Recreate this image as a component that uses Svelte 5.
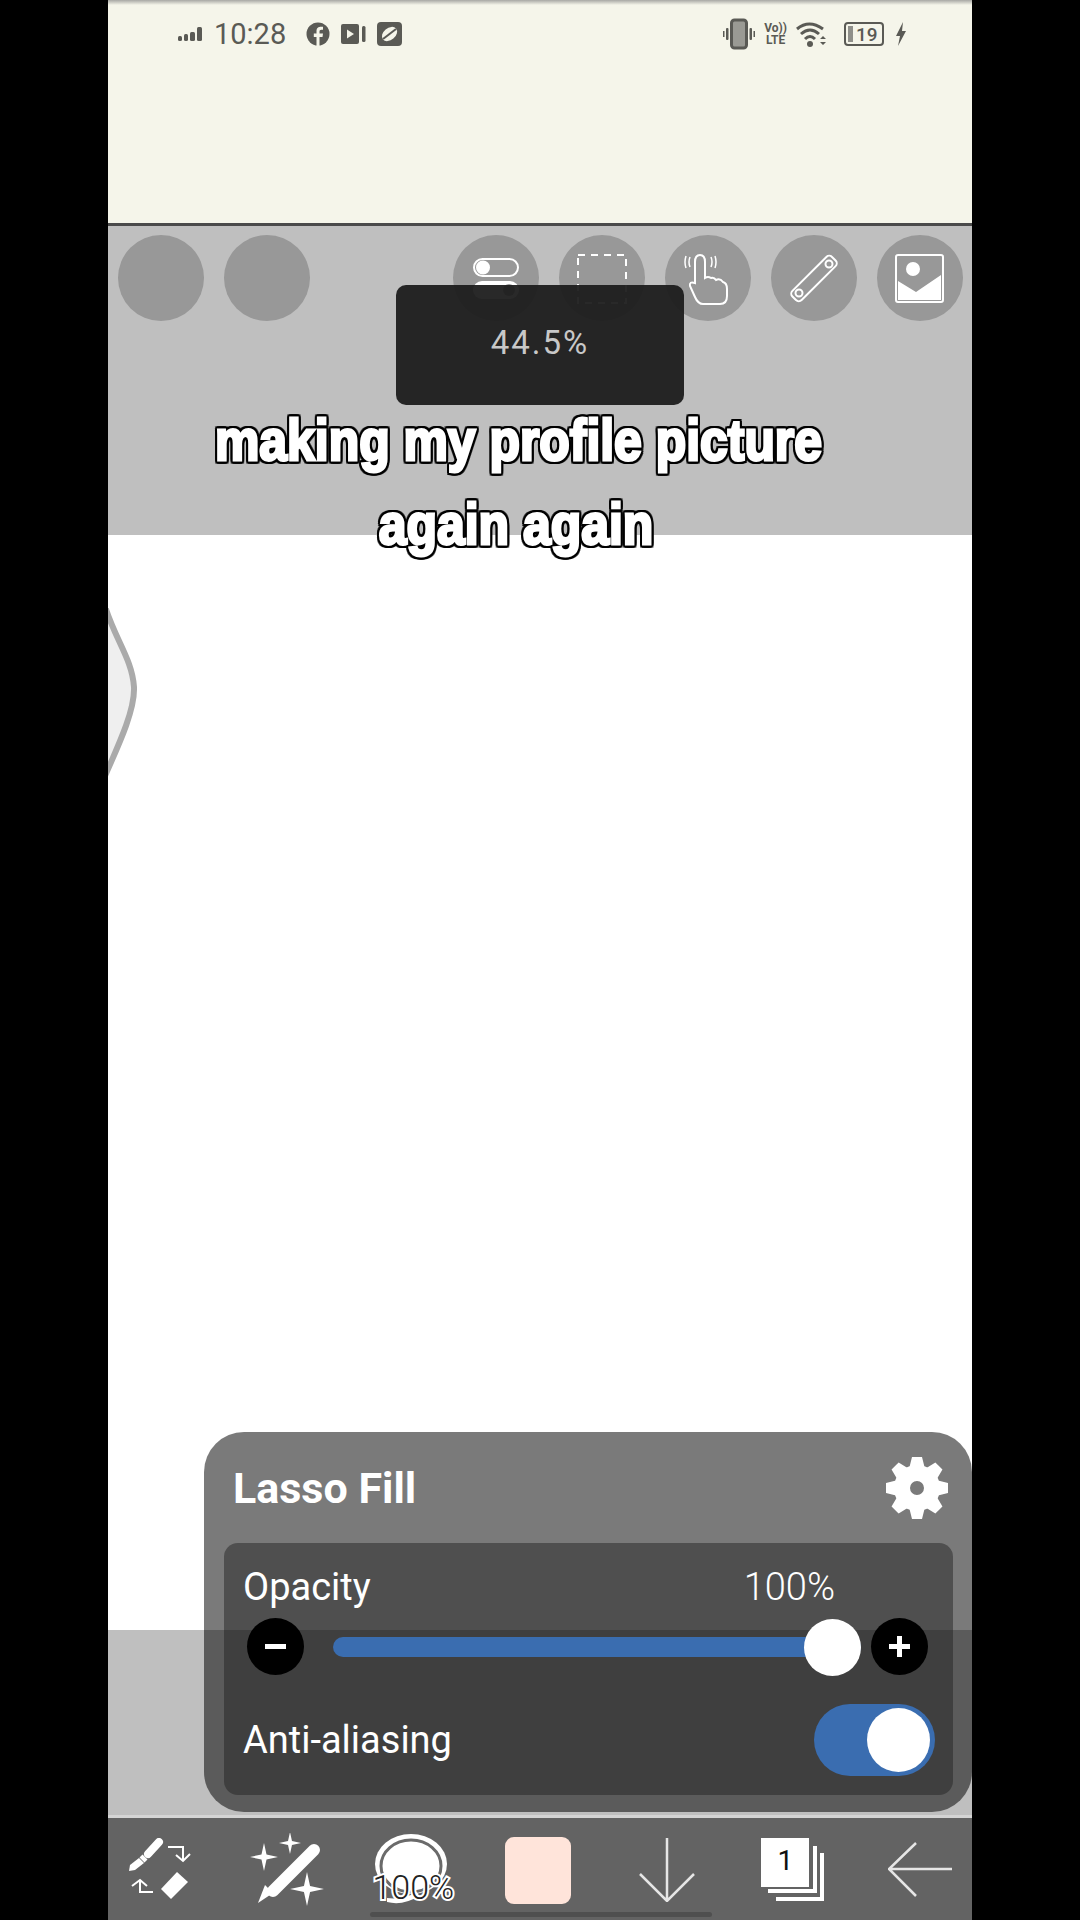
<script>
  const teeth = [0, 45, 90, 135, 180, 225, 270, 315];
  const star = "M0 -1 L.18 -.18 L1 0 L.18 .18 L0 1 L-.18 .18 L-1 0 L-.18 -.18Z";
</script>

<div class="phone">
  <header class="status">
    <div class="status-left">
      <svg class="signal" width="28" height="16" viewBox="0 0 28 16">
        <rect x="0" y="10" width="4" height="5" rx="1.5" />
        <rect x="6" y="8" width="4" height="7" rx="1.5" />
        <rect x="12" y="6" width="5" height="9" rx="1.5" />
        <rect x="19" y="1" width="5" height="14" rx="1.5" />
      </svg>
      <span class="time">10:28</span>
      <svg class="fb" width="24" height="24" viewBox="0 0 24 24">
        <circle cx="12" cy="12" r="11.5" />
        <path class="cut" d="M13.5 24v-9h3l.5-3.5h-3.500V9.500c0-1 .5-1.800 1.900-1.800H17V4.800c-3.500-.6-6.500.3-6.500 4.200v2.500H7.800V15h2.700v9z" />
      </svg>
      <svg class="cam" width="26" height="22" viewBox="0 0 26 22">
        <rect x="0" y="1" width="18" height="20" rx="2" />
        <path class="cut" d="M6 6.500l7 4.500-7 4.500z" />
        <rect x="21" y="3" width="3.500" height="16" rx="1.500" />
      </svg>
      <svg class="app" width="25" height="24" viewBox="0 0 25 24">
        <rect x="0" y="0" width="25" height="24" rx="4" />
        <ellipse class="cut" cx="12.500" cy="12" rx="8.500" ry="6" transform="rotate(-40 12.500 12)" />
        <path d="M6 17L19 7" stroke="#5a5a55" stroke-width="2" />
      </svg>
    </div>
    <div class="status-right">
      <svg width="32" height="32" viewBox="0 0 32 32" class="vib">
        <rect x="8.500" y="2" width="15" height="28" rx="3" fill="#9a9a94" stroke="#5a5a55" stroke-width="3" />
        <rect x="3" y="10" width="2.500" height="12" rx="1" />
        <rect x="26.500" y="10" width="2.500" height="12" rx="1" />
        <rect x="0" y="13" width="1.500" height="6" />
        <rect x="30.500" y="13" width="1.500" height="6" />
      </svg>
      <span class="volte">Vo))<br />LTE</span>
      <svg class="wifi" width="30" height="28" viewBox="0 0 30 28">
        <path d="M1 9Q13 -1 27 9M5 14Q14 6 23 14M9 19Q14 14 19 19" fill="none" stroke="#5a5a55" stroke-width="3" />
        <circle cx="14" cy="24" r="3" />
        <path d="M24 19h6l-3-3zM24 22h6l-3 3z" />
      </svg>
      <div class="battery">
        <i class="battery-level"></i>
        <span>19</span>
      </div>
      <svg class="bolt" width="10" height="24" viewBox="0 0 10 24">
        <path d="M7 0L0 14h4l-2 10 8-15H6z" />
      </svg>
    </div>
  </header>

  <nav class="toolbar">
    <div class="round"></div>
    <div class="round"></div>
    <div class="round push">
      <svg width="86" height="86" viewBox="0 0 86 86" fill="none" stroke="#fff" stroke-width="2">
        <rect x="21" y="24" width="44" height="17" rx="8.500" />
        <circle cx="30" cy="32.500" r="6" fill="#fff" />
        <rect x="20" y="46" width="46" height="18" rx="9" fill="#fff" stroke="none" />
        <circle cx="56" cy="55" r="6" fill="#989898" stroke="none" />
      </svg>
    </div>
    <div class="round">
      <svg width="86" height="86" viewBox="0 0 86 86" fill="none" stroke="#fff" stroke-width="2">
        <rect x="19" y="20" width="48" height="48" stroke-dasharray="7 6" />
      </svg>
    </div>
    <div class="round">
      <svg width="86" height="86" viewBox="0 0 86 86" fill="none" stroke="#fff" stroke-width="2">
        <path d="M30 48V27q0-7 5-7t5 7v16q3-2 6 0 3-1 5 2 4-2 7 2 4 1 4 7v7q0 8-7 8H38q-5 0-8-7l-5-11q-1-5 5-3z" />
        <path d="M25 22q-2 5 0 10M21 21q-2 6 0 12M46 22q2 5 0 10M50 21q2 6 0 12" stroke-width="1.500" />
      </svg>
    </div>
    <div class="round">
      <svg width="86" height="86" viewBox="0 0 86 86" fill="none" stroke="#fff" stroke-width="2">
        <rect x="15" y="37" width="56" height="13" rx="4" transform="rotate(-45 43 43.500)" />
        <circle cx="58" cy="29" r="3.500" />
        <circle cx="28" cy="58" r="3.500" />
      </svg>
    </div>
    <div class="round">
      <svg width="86" height="86" viewBox="0 0 86 86" fill="none" stroke="#fff" stroke-width="2">
        <rect x="19" y="20" width="47" height="47" rx="2" />
        <circle cx="36" cy="34" r="7" fill="#fff" stroke="none" />
        <path d="M21 46l18 11 25-17v25H21z" fill="#fff" stroke="none" />
      </svg>
    </div>
  </nav>

  <main class="canvas">
    <svg class="stroke" width="40" height="180" viewBox="0 0 40 180">
      <path d="M-4 -5C6 30 24 50 26 79 27 100 14 130 -4 170" fill="#efefef" stroke="#aaa" stroke-width="6" />
    </svg>
  </main>

  <div class="under"></div>

  <footer class="bottom">
    <div class="slot">
      <svg width="64" height="64" viewBox="0 0 64 64" fill="none" stroke="#fff" stroke-width="2">
        <path d="M31 4L20 16" stroke-width="8" stroke-linecap="round" />
        <path d="M17 19l-3 3" stroke-width="7" />
        <path d="M11 20l5 5-9 7-6 1 1-6z" fill="#fff" stroke="none" />
        <path d="M49 34l11 10-17 17-10-10z" fill="#fff" stroke="none" />
        <path d="M40 9h15v13M48 17l7 6 7-7" />
        <path d="M25 54H12V42M4 48l8-6 7 6" />
      </svg>
    </div>
    <div class="slot">
      <svg width="74" height="74" viewBox="0 0 74 74" fill="#fff">
        <path d="M64 17L23 58" fill="none" stroke="#fff" stroke-width="12" stroke-linecap="round" />
        <path d="M15 52l8 8-15 10z" />
        <path d={star} transform="translate(14 24) scale(14)" />
        <path d={star} transform="translate(40 10) scale(11)" />
        <path d={star} transform="translate(57 56) scale(17)" />
      </svg>
    </div>
    <div class="slot">
      <div class="lasso">
        <svg width="80" height="72" viewBox="0 0 80 72">
          <ellipse cx="38" cy="30" rx="36" ry="30" fill="#fff" />
          <ellipse cx="38" cy="32" rx="30" ry="26" fill="none" stroke="#6a6a6a" stroke-width="3" />
          <path d="M14 64Q30 66 44 58L46 62Q30 72 14 68z" fill="#fff" />
        </svg>
        <span>100%</span>
      </div>
    </div>
    <div class="slot">
      <div class="swatch"></div>
    </div>
    <div class="slot">
      <svg width="64" height="64" viewBox="0 0 64 64" fill="none" stroke="#e6e6e6" stroke-width="2.500">
        <path d="M32 0V63M5 36l27 27 27-27" />
      </svg>
    </div>
    <div class="slot">
      <div class="layers">
        <svg width="64" height="64" viewBox="0 0 64 64" fill="none" stroke="#fff" stroke-width="4">
          <path d="M7 53H54V8M15 61H61V15" />
        </svg>
        <span>1</span>
      </div>
    </div>
    <div class="slot">
      <svg width="64" height="64" viewBox="0 0 64 64" fill="none" stroke="#e6e6e6" stroke-width="2.500">
        <path d="M28 5L1 31l27 27M1 31H64" />
      </svg>
    </div>
  </footer>

  <div class="home"></div>

  <div class="toast">44.5%</div>

  <div class="caption">
    <div>making my profile picture</div>
    <div>again again</div>
  </div>

  <section class="panel">
    <div class="panel-head">
      <h2>Lasso Fill</h2>
      <svg width="64" height="64" viewBox="0 0 64 64" fill="#fff">
        {#each teeth as t}
          <path d="M27 1h10l3 12H24z" transform="rotate({t} 32 32)" />
        {/each}
        <circle cx="32" cy="32" r="15" fill="none" stroke="#fff" stroke-width="16" />
      </svg>
    </div>
    <div class="panel-body">
      <div class="row-label">
        <span>Opacity</span>
        <span class="pct">100%</span>
      </div>
      <div class="slider">
        <button class="step">
          <i class="dash"></i>
        </button>
        <div class="track">
          <div class="knob"></div>
        </div>
        <button class="step">
          <i class="dash"></i>
          <i class="dash up"></i>
        </button>
      </div>
      <div class="row-toggle">
        <span>Anti-aliasing</span>
        <div class="toggle"><div class="toggle-knob"></div></div>
      </div>
    </div>
  </section>
</div>

<style>
  :global(body) {
    background: #000;
  }

  .phone {
    position: relative;
    width: 864px;
    height: 1920px;
    margin: 0 auto;
    display: flex;
    flex-direction: column;
    overflow: hidden;
    font-family: Roboto, "Liberation Sans", sans-serif;
  }

  /* status bar */
  .status {
    height: 226px;
    box-sizing: border-box;
    padding: 20px 66px 0 70px;
    display: flex;
    justify-content: space-between;
    align-items: flex-start;
    background: linear-gradient(#a8a8a4, #f5f5ea 5px);
    border-bottom: 3px solid #4a4a4a;
    flex-shrink: 0;
    fill: #5a5a55;
  }

  .status-left,
  .status-right {
    display: flex;
    align-items: center;
    height: 28px;
  }

  .cut {
    fill: #f5f5ea;
  }

  .time {
    font-size: 29px;
    color: #5a5a55;
    margin-left: 8px;
    width: 72px;
  }

  .fb {
    margin-left: 20px;
  }

  .cam {
    margin-left: 11px;
  }

  .app {
    margin-left: 10px;
  }

  .volte {
    font-size: 12px;
    line-height: 12px;
    font-weight: 700;
    color: #5a5a55;
    margin-left: 9px;
    text-align: center;
  }

  .wifi {
    margin-left: 9px;
  }

  .battery {
    margin-left: 18px;
    width: 40px;
    height: 24px;
    box-sizing: border-box;
    border: 2px solid #5a5a55;
    border-radius: 4px;
    display: flex;
    align-items: center;
    font-size: 19px;
    color: #5a5a55;
    font-weight: 500;
    padding-left: 2px;
    gap: 3px;
  }

  .battery-level {
    width: 5px;
    height: 16px;
    background: #8f8f8a;
  }

  .bolt {
    margin-left: 12px;
  }

  /* top toolbar */
  .toolbar {
    height: 309px;
    box-sizing: border-box;
    background: #bfbfbf;
    padding: 9px 9px 0 10px;
    display: flex;
    gap: 20px;
    flex-shrink: 0;
  }

  .round {
    width: 86px;
    height: 86px;
    border-radius: 50%;
    background: #989898;
  }

  .push {
    margin-left: auto;
  }

  .canvas {
    flex: 1;
    background: #fff;
    padding-top: 73px;
  }

  .stroke {
    display: block;
  }

  .under {
    height: 185px;
    background: #bfbfbf;
    border-bottom: 3px solid #d4d4d4;
    flex-shrink: 0;
  }

  /* bottom toolbar */
  .bottom {
    height: 102px;
    box-sizing: border-box;
    background: #636363;
    padding: 20px 20px 0;
    display: flex;
    justify-content: space-between;
    align-items: flex-start;
    flex-shrink: 0;
  }

  .slot {
    width: 64px;
    height: 64px;
    display: flex;
    justify-content: center;
    align-items: center;
    flex-shrink: 0;
  }

  .slot svg {
    flex-shrink: 0;
  }

  .lasso {
    position: relative;
    width: 80px;
    height: 72px;
    flex-shrink: 0;
  }

  .lasso span {
    position: absolute;
    left: -4px;
    right: -4px;
    top: 33px;
    text-align: center;
    font-size: 34px;
    font-weight: 300;
    color: #222;
    -webkit-text-stroke: 4px #fff;
    paint-order: stroke fill;
  }

  .swatch {
    width: 66px;
    height: 67px;
    margin-right: 4px;
    border-radius: 9px;
    background: #ffe4da;
    flex-shrink: 0;
  }

  .layers {
    position: relative;
    width: 64px;
    height: 64px;
  }

  .layers::before {
    content: "";
    position: absolute;
    left: 0;
    top: 0;
    width: 48px;
    height: 49px;
    background: #fff;
  }

  .layers svg {
    position: absolute;
    left: 0;
    top: 0;
  }

  .layers span {
    position: absolute;
    left: 0;
    top: 6px;
    width: 48px;
    text-align: center;
    font-size: 28px;
    color: #111;
  }

  .home {
    position: absolute;
    left: 262px;
    bottom: 3px;
    width: 342px;
    height: 5px;
    border-radius: 3px;
    background: #4f4f4f;
  }

  .toast {
    position: absolute;
    left: 288px;
    top: 285px;
    width: 288px;
    height: 120px;
    border-radius: 10px;
    background: rgba(28, 28, 28, 0.94);
    color: #c8c8c8;
    font-size: 33px;
    letter-spacing: 2px;
    text-align: center;
    line-height: 116px;
  }

  .caption {
    position: absolute;
    left: 58px;
    top: 398px;
    width: 700px;
    text-align: center;
    white-space: nowrap;
    font-family: "Liberation Sans", sans-serif;
    font-weight: 700;
    font-size: 58px;
    line-height: 84px;
    color: #fff;
    -webkit-text-stroke: 3px #fff;
    transform: scaleX(0.86);
    filter: drop-shadow(2px 0 0 #000) drop-shadow(-2px 0 0 #000) drop-shadow(0 2px 0 #000) drop-shadow(0 -2px 0 #000);
  }

  /* tool panel */
  .panel {
    position: absolute;
    left: 96px;
    top: 1432px;
    width: 768px;
    height: 380px;
    box-sizing: border-box;
    border-radius: 40px;
    background: rgba(0, 0, 0, 0.52);
    padding: 0 19px 17px 20px;
    display: flex;
    flex-direction: column;
    color: #fff;
  }

  .panel-head {
    height: 111px;
    display: flex;
    justify-content: space-between;
    align-items: center;
    padding: 0 4px 0 9px;
    flex-shrink: 0;
  }

  h2 {
    margin: 0;
    font-size: 43px;
    font-weight: 700;
  }

  .panel-body {
    flex: 1;
    border-radius: 14px;
    background: rgba(35, 35, 35, 0.5);
    padding: 22px 19px 0 19px;
    display: flex;
    flex-direction: column;
  }

  .row-label {
    display: flex;
    justify-content: space-between;
    align-items: center;
    height: 44px;
    font-size: 38px;
    padding-right: 99px;
  }

  .pct {
    font-size: 38px;
    font-weight: 300;
  }

  .slider {
    display: flex;
    align-items: center;
    gap: 10px;
    margin-top: 9px;
    padding-left: 4px;
    margin-right: 6px;
  }

  .step {
    position: relative;
    width: 57px;
    height: 57px;
    border: 0;
    padding: 0;
    border-radius: 50%;
    background: #000;
    flex-shrink: 0;
  }

  .dash {
    position: absolute;
    left: 18px;
    top: 26px;
    width: 21px;
    height: 5px;
    background: #fff;
  }

  .dash.up {
    transform: rotate(90deg);
  }

  .track {
    position: relative;
    flex: 1;
    height: 20px;
    margin-left: 19px;
    border-radius: 10px;
    background: #3a6db0;
  }

  .knob {
    position: absolute;
    right: 0;
    top: -18px;
    width: 57px;
    height: 57px;
    border-radius: 50%;
    background: #fff;
  }

  .row-toggle {
    display: flex;
    justify-content: space-between;
    align-items: center;
    margin-top: 29px;
    font-size: 38px;
  }

  .toggle {
    width: 121px;
    height: 72px;
    box-sizing: border-box;
    border-radius: 36px;
    background: #3a6db0;
    padding: 4px 5px;
    display: flex;
    justify-content: flex-end;
    margin-right: -1px;
  }

  .toggle-knob {
    width: 63px;
    height: 64px;
    border-radius: 50%;
    background: #fff;
  }
</style>
